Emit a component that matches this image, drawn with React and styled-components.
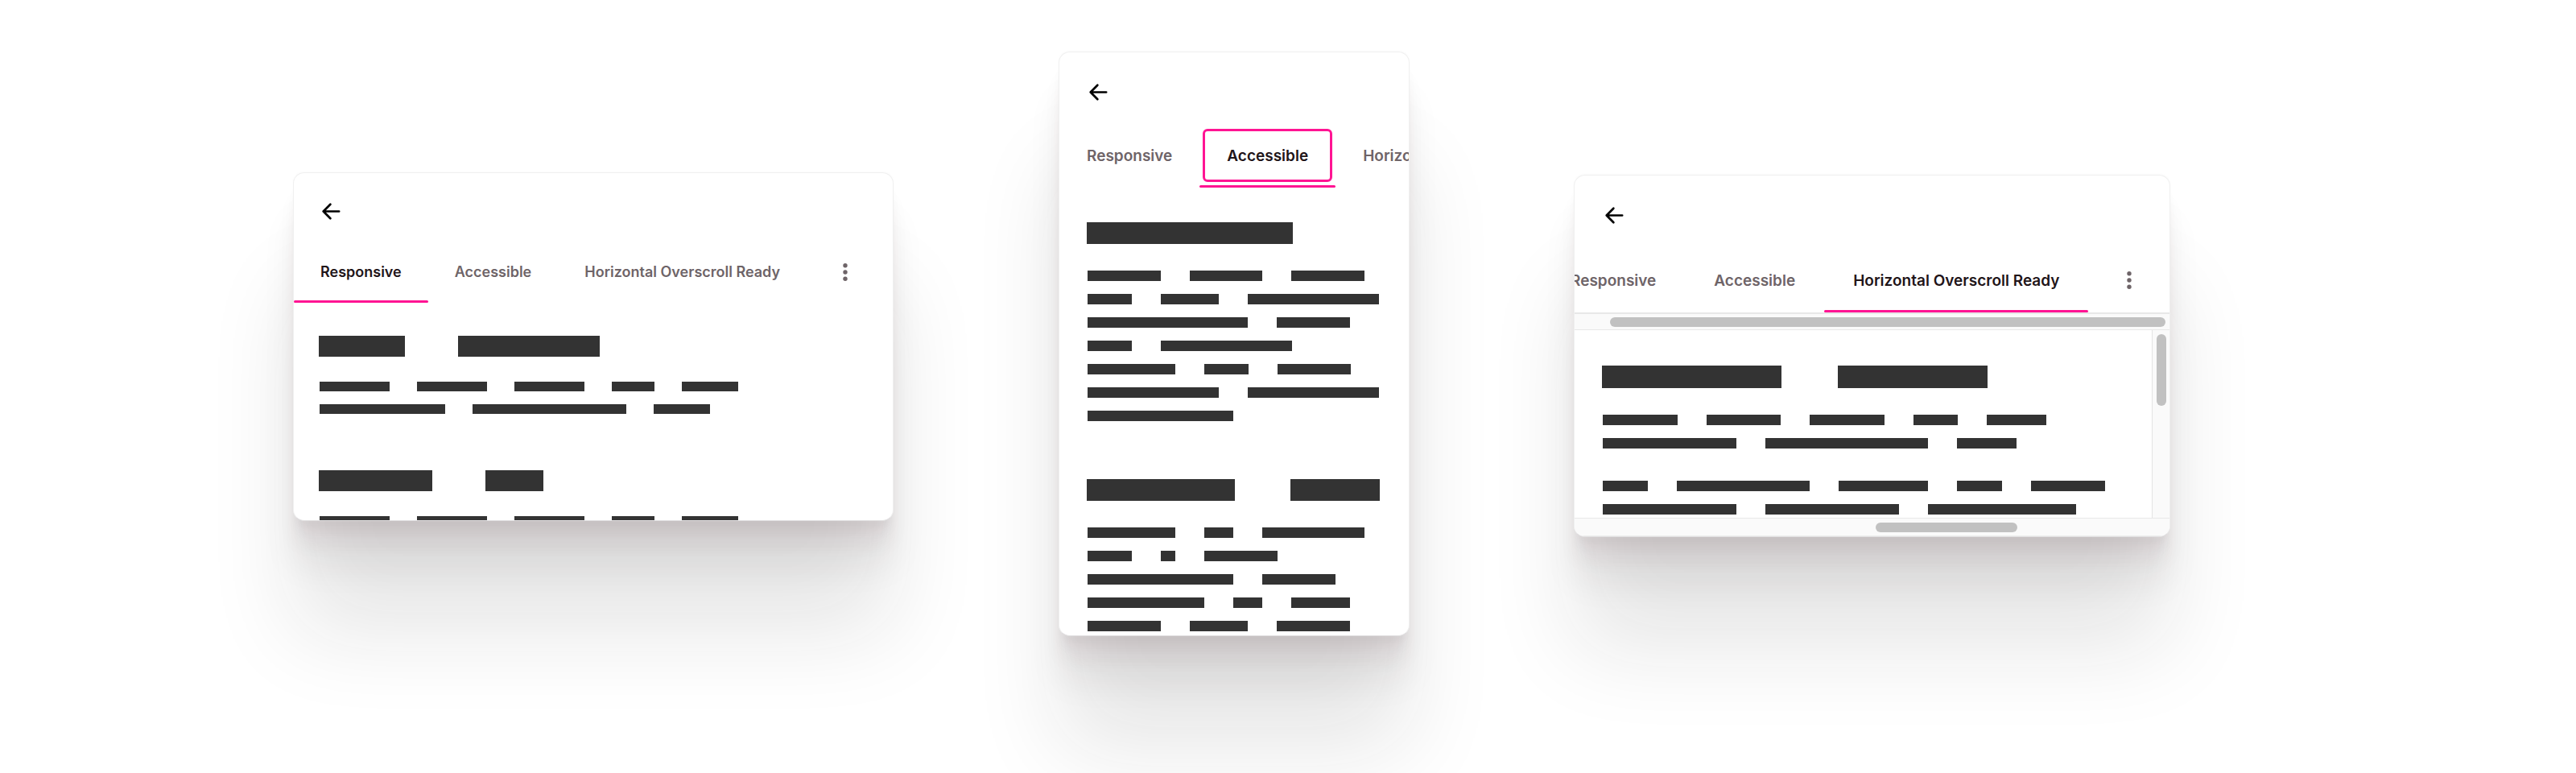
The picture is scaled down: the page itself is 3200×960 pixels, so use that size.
import React from 'react';
import styled, { createGlobalStyle, css } from 'styled-components';

const PINK = '#ff1493';
const INK = '#333';

const GlobalStyle = createGlobalStyle`
  *, *::before, *::after { box-sizing: border-box; }
  body {
    margin: 0;
    background: #fff;
    font-family: Inter, "Liberation Sans", sans-serif;
  }
`;

const Stage = styled.main`
  display: grid;
  grid-template-columns: 364fr 746fr 205fr 436fr 204fr 741fr 504fr;
  align-items: start;
  min-height: 100vh;
  overflow: hidden;
`;

const Card = styled.article`
  grid-column: ${(p) => p.$column};
  margin-top: ${(p) => p.$top}px;
  aspect-ratio: ${(p) => p.$ratio};
  min-width: 0;
  display: flex;
  flex-direction: column;
  overflow: hidden;
  background: #fff;
  border: 1px solid #f0f0f0;
  border-bottom-color: #e2e1e2;
  border-radius: 14px;
  box-shadow:
    0 -1px 3px rgba(30, 20, 24, 0.02),
    0 10px 7px -3px rgba(70, 10, 36, 0.02),
    0 17px 14px -3px rgba(70, 10, 36, 0.03),
    0 31px 25px -3px rgba(70, 10, 36, 0.05),
    0 57px 46px -3px rgba(36, 28, 31, 0.07),
    0 140px 112px -3px rgba(30, 30, 30, 0.11);
`;

const Header = styled.header`
  flex: none;
  display: flex;
  height: ${(p) => p.$height}px;
  padding: ${(p) => p.$top}px ${(p) => p.$inset}px 0;
`;

const BackButton = styled.button`
  display: block;
  width: 25px;
  height: 25px;
  padding: 0;
  border: 0;
  background: none;
  color: #000;
  svg { display: block; width: 100%; height: 100%; }
`;

const TabBar = styled.nav`
  flex: none;
  display: flex;
  overflow: hidden;
  margin-left: ${(p) => (p.$scrolled ? -41 : 0)}px;
`;

const Tab = styled.a`
  flex: none;
  display: flex;
  flex-direction: column;
  color: ${(p) => (p.$active ? '#1f1519' : '#6e6468')};
  font-size: ${(p) => p.$size}px;
  font-weight: 600;
  text-decoration: none;
  white-space: nowrap;

  &::after {
    content: '';
    height: 3px;
    border-radius: 2px;
    background: ${(p) => (p.$active ? PINK : 'transparent')};
  }
`;

const TabLabel = styled.span`
  display: flex;
  align-items: center;
  height: ${(p) => p.$height - 8}px;
  margin: 4px;
  padding: 0 ${(p) => p.$pad - 7}px;
  border: 3px solid ${(p) => (p.$focused ? PINK : 'transparent')};
  border-radius: 6px;
`;

const MoreButton = styled.button`
  flex: none;
  width: ${(p) => p.$width}px;
  height: ${(p) => p.$height}px;
  display: grid;
  place-items: center;
  padding: 0;
  border: 0;
  background: none;
  color: #6e6468;
`;

const Pane = styled.div`
  flex: 1;
  min-width: 0;
  min-height: 0;
  overflow: hidden;
  display: flex;
  flex-direction: column;
  gap: ${(p) => p.$gap}px;
  padding: ${(p) => p.$top}px 0 0 ${(p) => p.$left}px;
`;

const Section = styled.section`
  flex: none;
  display: flex;
  flex-direction: column;
`;

const Row = styled.div`
  display: flex;
  gap: ${(p) => p.$gap}px;
`;

const Paragraph = styled.div`
  display: flex;
  flex-direction: column;
  gap: 16px;
  padding-left: 1px;
  margin-top: ${(p) => p.$top}px;
`;

const Bar = styled.span`
  flex: none;
  width: ${(p) => p.$width}px;
  height: ${(p) => p.$height}px;
  background: ${INK};
`;

const Thumb = styled.div`
  border-radius: 6px;
  background: #c1c1c1;
`;

const HorizontalTrack = styled.div`
  flex: none;
  display: grid;
  grid-template-columns: ${(p) => p.$columns};
  background: #fafafa;
  ${(p) =>
    p.$under
      ? css`
          padding: 4px 5px 3px 0;
          border-top: 2px solid #e8e8e8;
          border-bottom: 1px solid #e8e8e8;
        `
      : css`
          padding: 5px 0 4px;
          border-top: 1px solid #e8e8e8;
          border-bottom: 1px solid #ededed;
        `}

  ${Thumb} { grid-column: 2; height: 12px; }
`;

const Scroller = styled.div`
  flex: 1;
  min-height: 0;
  display: flex;
`;

const VerticalTrack = styled.div`
  flex: none;
  width: 22px;
  padding: 5px 4px 0 5px;
  background: #fafafa;
  border-left: 1px solid #e4e4e4;

  ${Thumb} { height: 89px; }
`;

const ArrowIcon = () => (
  <svg viewBox="0 0 24 24" fill="none" stroke="currentColor" strokeWidth="2.6" strokeLinecap="round" strokeLinejoin="round" aria-hidden="true">
    <path d="M21.3 12H2.6M10.9 3.6L2.6 12l8.3 8.4" />
  </svg>
);

const DotsIcon = () => (
  <svg width="6" height="22" viewBox="0 0 6 22" fill="currentColor" aria-hidden="true">
    <circle cx="3" cy="2.8" r="2.7" />
    <circle cx="3" cy="11" r="2.7" />
    <circle cx="3" cy="19.2" r="2.7" />
  </svg>
);

const TABS = ['Responsive', 'Accessible', 'Horizontal Overscroll Ready'];

const TopBar = ({ m }) => (
  <Header $height={m.header} $top={m.arrowTop} $inset={m.arrow}>
    <BackButton type="button" aria-label="Back">
      <ArrowIcon />
    </BackButton>
  </Header>
);

const Tabs = ({ m, active, focused, scrolled }) => (
  <TabBar $scrolled={scrolled}>
    {TABS.map((name, i) => (
      <Tab key={name} href="#" $active={i === active} $size={m.font} aria-current={i === active ? 'page' : undefined}>
        <TabLabel $height={m.tab} $pad={m.pad} $focused={i === focused}>{name}</TabLabel>
      </Tab>
    ))}
    <MoreButton type="button" aria-label="More" $width={m.more} $height={m.tab}>
      <DotsIcon />
    </MoreButton>
  </TabBar>
);

const Copy = ({ m, sections }) => (
  <Pane $gap={m.sectionGap} $top={m.paneTop} $left={m.paneLeft}>
    {sections.map((section, s) => (
      <Section key={s}>
        <Row $gap={m.titleGap}>
          {section.title.map((w, i) => <Bar key={i} $width={w} $height={m.titleHeight} />)}
        </Row>
        {section.paragraphs.map((lines, p) => (
          <Paragraph key={p} $top={p === 0 ? m.leadGap : 40}>
            {lines.map((line, l) => (
              <Row key={l} $gap={m.wordGap}>
                {line.map((w, i) => <Bar key={i} $width={w} $height={m.lineHeight} />)}
              </Row>
            ))}
          </Paragraph>
        ))}
      </Section>
    ))}
  </Pane>
);

const first = {
  header: 87, arrowTop: 35, arrow: 34, font: 18, tab: 71, pad: 33, more: 96,
  paneTop: 41, paneLeft: 31, sectionGap: 70,
  titleHeight: 26, titleGap: 66, leadGap: 31, lineHeight: 12, wordGap: 34,
};

const second = {
  header: 91, arrowTop: 37, arrow: 36, font: 19, tab: 74, pad: 34, more: 96,
  paneTop: 43, paneLeft: 34, sectionGap: 72,
  titleHeight: 27, titleGap: 69, leadGap: 33, lineHeight: 13, wordGap: 36,
};

const third = {
  header: 93, arrowTop: 37, arrow: 37, font: 19, tab: 74, pad: 36, more: 102,
  paneTop: 44, paneLeft: 34, sectionGap: 72,
  titleHeight: 28, titleGap: 70, leadGap: 33, lineHeight: 13, wordGap: 36,
};

const firstCopy = [
  { title: [107, 176], paragraphs: [[[87, 87, 87, 53, 70], [156, 191, 70]]] },
  { title: [141, 72], paragraphs: [[[87, 87, 87, 53, 70], [156, 191, 70]]] },
];

const secondCopy = [
  {
    title: [256],
    paragraphs: [[[91, 90, 91], [55, 72, 163], [199, 91], [55, 163], [109, 55, 91], [163, 163], [181]]],
  },
  {
    title: [184, 111],
    paragraphs: [[[109, 36, 127], [55, 18, 91], [181, 91], [145, 36, 73], [91, 72, 91]]],
  },
];

const thirdCopy = [
  {
    title: [223, 186],
    paragraphs: [
      [[93, 92, 93, 55, 74], [166, 202, 74]],
      [[56, 165, 111, 56, 92], [166, 166, 184]],
    ],
  },
];

export default function App() {
  return (
    <>
      <GlobalStyle />
      <Stage>
        <Card $column={2} $top={214} $ratio="746 / 433">
          <TopBar m={first} />
          <Tabs m={first} active={0} />
          <Copy m={first} sections={firstCopy} />
        </Card>

        <Card $column={4} $top={64} $ratio="436 / 726">
          <TopBar m={second} />
          <Tabs m={second} active={1} focused={1} />
          <Copy m={second} sections={secondCopy} />
        </Card>

        <Card $column={6} $top={217} $ratio="741 / 450">
          <TopBar m={third} />
          <Tabs m={third} active={2} scrolled />
          <HorizontalTrack $under $columns="6fr 94fr">
            <Thumb />
          </HorizontalTrack>
          <Scroller>
            <Copy m={third} sections={thirdCopy} />
            <VerticalTrack>
              <Thumb />
            </VerticalTrack>
          </Scroller>
          <HorizontalTrack $columns="374fr 176fr 189fr">
            <Thumb />
          </HorizontalTrack>
        </Card>
      </Stage>
    </>
  );
}
